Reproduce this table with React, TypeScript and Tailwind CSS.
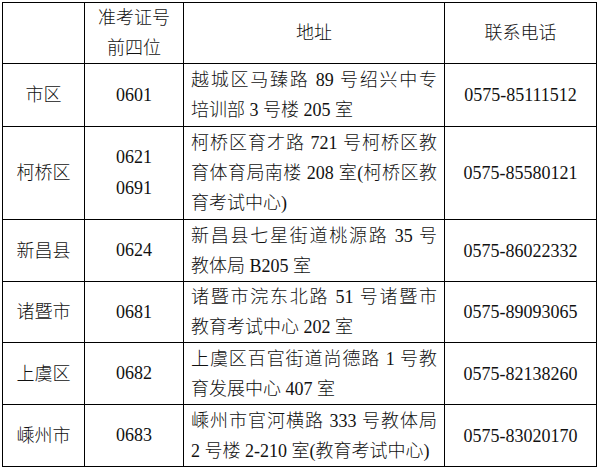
const rows = [
  { area: "市区", code: ["0601"], addr: ["越城区马臻路 89 号绍兴中专", "培训部 3 号楼 205 室"], tel: "0575-85111512", h: "h-[63px]" },
  { area: "柯桥区", code: ["0621", "0691"], addr: ["柯桥区育才路 721 号柯桥区教", "育体育局南楼 208 室(柯桥区教", "育考试中心)"], tel: "0575-85580121", h: "h-[93px]" },
  { area: "新昌县", code: ["0624"], addr: ["新昌县七星街道桃源路 35 号", "教体局 B205 室"], tel: "0575-86022332", h: "h-[62px]" },
  { area: "诸暨市", code: ["0681"], addr: ["诸暨市浣东北路 51 号诸暨市", "教育考试中心 202 室"], tel: "0575-89093065", h: "h-[61px]" },
  { area: "上虞区", code: ["0682"], addr: ["上虞区百官街道尚德路 1 号教", "育发展中心 407 室"], tel: "0575-82138260", h: "h-[62px]" },
  { area: "嵊州市", code: ["0683"], addr: ["嵊州市官河横路 333 号教体局", "2 号楼 2-210 室(教育考试中心)"], tel: "0575-83020170", h: "h-[62px]" },
];

export default function App() {
  return (
    <div className="w-[598px] h-[471px] bg-white pt-[2px] pl-[2px] font-['Liberation_Serif','Noto_Sans_CJK_SC',serif] font-light text-[18px] leading-[30px] text-[#111]">
      <table className="table-fixed border-collapse w-[594px]">
        <colgroup>
          <col className="w-[82px]" />
          <col className="w-[99px]" />
          <col className="w-[261px]" />
          <col className="w-[152px]" />
        </colgroup>
        <thead>
          <tr className="h-[61px]">
            <th className="border border-black font-light"></th>
            <th className="border border-black font-light text-center">
              <div>准考证号</div>
              <div>前四位</div>
            </th>
            <th className="border border-black font-light text-center">地址</th>
            <th className="border border-black font-light text-center">联系电话</th>
          </tr>
        </thead>
        <tbody>
          {rows.map((r) => (
            <tr key={r.area} className={r.h}>
              <td className="border border-black text-center p-0">{r.area}</td>
              <td className="border border-black text-center p-0">
                {r.code.map((c) => (
                  <div key={c} className="leading-[31px]">{c}</div>
                ))}
              </td>
              <td className="border border-black px-[7px] py-0">
                {r.addr.map((l, i) => (
                  <div
                    key={i}
                    className={i < r.addr.length - 1 ? "text-justify [text-align-last:justify] whitespace-nowrap" : "whitespace-nowrap"}
                  >
                    {l}
                  </div>
                ))}
              </td>
              <td className="border border-black text-center p-0">{r.tel}</td>
            </tr>
          ))}
        </tbody>
      </table>
    </div>
  );
}
